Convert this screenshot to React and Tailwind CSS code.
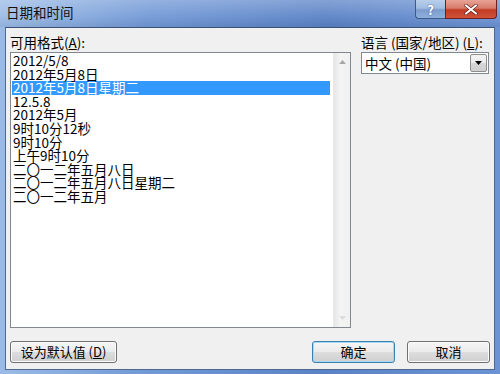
const formats = [
  '2012/5/8',
  '2012年5月8日',
  '2012年5月8日星期二',
  '12.5.8',
  '2012年5月',
  '9时10分12秒',
  '9时10分',
  '上午9时10分',
  '二〇一二年五月八日',
  '二〇一二年五月八日星期二',
  '二〇一二年五月',
];

const font = { fontFamily: '"Noto Sans CJK SC", "Noto Sans", sans-serif' };

function Button({ children, primary, className }) {
  return (
    <div
      className={`h-[22px] flex items-center justify-center rounded-[3px] border text-[13px] text-black bg-[linear-gradient(#f6f6f6_0%,#ebebeb_48%,#dddddd_52%,#cfcfcf_100%)] ${
        primary ? 'border-[#3c7fb1] shadow-[inset_0_0_0_1px_#a6d8f5]' : 'border-[#707070] shadow-[inset_0_0_0_1px_#fbfbfb]'
      } ${className}`}
    >
      {children}
    </div>
  );
}

export default function App() {
  return (
    <div
      className="w-[500px] h-[374px] flex flex-col bg-[linear-gradient(90deg,#9bbbe6_0%,#7198d6_30%,#5a82c6_65%,#6c93d4_100%)]"
      style={font}
    >
      {/* title bar */}
      <div className="h-[27px] flex items-start justify-between bg-[linear-gradient(#ffffff40,#ffffff10_60%,#00000010)]">
        <span className="pl-[6px] pt-[3px] text-[13.5px] leading-[18px] text-[#101010]">日期和时间</span>
        <div className="flex mr-[3px]">
          <div className="w-[30px] h-[19px] flex items-center justify-center rounded-bl-[4px] border border-[#3d5a85] border-t-0 border-r-0 bg-[linear-gradient(#b9cfea_0%,#a2bde2_45%,#7d9ccd_55%,#8eb0dc_100%)] text-white text-[13px] font-bold leading-none [text-shadow:0_0_2px_#3a5580]">
            ?
          </div>
          <div className="w-[52px] h-[19px] flex items-center justify-center rounded-br-[4px] border border-[#6e2020] border-t-0 bg-[linear-gradient(#e8a497_0%,#d77b69_45%,#c23b23_55%,#d0533a_100%)]">
            <svg width="14" height="11" viewBox="0 0 14 11">
              <path d="M2 1.5 L12 9.5 M12 1.5 L2 9.5" stroke="#5a1a10" strokeWidth="3.4" strokeLinecap="round" />
              <path d="M2 1.5 L12 9.5 M12 1.5 L2 9.5" stroke="#ffffff" strokeWidth="2.2" strokeLinecap="round" />
            </svg>
          </div>
        </div>
      </div>

      {/* client area */}
      <div className="flex-1 mx-[5px] mb-[4px] border border-[#4f6890] border-t-[#3b5278] bg-[#f0f0f0] flex flex-col px-[4px] pt-[5px]">
        <div className="flex gap-[10px]">
          <div className="w-[341px] flex flex-col">
            <div className="h-[18px] text-[13.5px] leading-[18px] text-black">
              可用格式(<span className="underline">A</span>):
            </div>
            <div className="mt-[1px] h-[276px] border border-[#828790] bg-white flex">
              <div className="flex-1 pt-[1px] pl-[1px] pr-[3px]">
                {formats.map((f, i) => (
                  <div
                    key={f}
                    className={`h-[13.6px] leading-[13.6px] pl-[1px] text-[13.5px] whitespace-nowrap ${
                      i === 2 ? 'bg-[#3399ff] text-white' : 'text-black'
                    }`}
                  >
                    {f}
                  </div>
                ))}
              </div>
              <div className="w-[17px] bg-[linear-gradient(90deg,#e6e6e6,#f4f4f4_40%,#f0f0f0)] border-l border-[#e9e9e9] flex flex-col justify-between items-center py-[7px]">
                <svg width="7" height="4" viewBox="0 0 7 4">
                  <path d="M0 4 L3.5 0 L7 4 Z" fill="#a8a8a8" />
                </svg>
                <svg width="7" height="4" viewBox="0 0 7 4">
                  <path d="M0 0 L3.5 4 L7 0 Z" fill="#dcdcdc" />
                </svg>
              </div>
            </div>
          </div>

          <div className="w-[128px] flex flex-col">
            <div className="h-[18px] text-[13.5px] leading-[18px] text-black whitespace-nowrap">
              语言 (国家/地区) (<span className="underline">L</span>):
            </div>
            <div className="mt-[1px] h-[22px] border border-[#828790] bg-white flex items-center">
              <span className="flex-1 pl-[3px] text-[13.5px] leading-[18px] text-black">中文 (中国)</span>
              <div className="w-[17px] h-[18px] mr-[1px] border border-[#8f8f8f] rounded-[2px] bg-[linear-gradient(#f2f2f2,#ebebeb_50%,#d6d6d6_51%,#cfcfcf)] flex items-center justify-center">
                <svg width="7" height="4" viewBox="0 0 7 4">
                  <path d="M0 0 L3.5 4 L7 0 Z" fill="#000" />
                </svg>
              </div>
            </div>
          </div>
        </div>

        <div className="mt-[13px] flex items-center">
          <Button className="w-[107px]">
            设为默认值 (<span className="underline">D</span>)
          </Button>
          <div className="flex-1" />
          <Button primary className="w-[83px]">确定</Button>
          <Button className="w-[83px] ml-[12px]">取消</Button>
        </div>
      </div>
    </div>
  );
}
